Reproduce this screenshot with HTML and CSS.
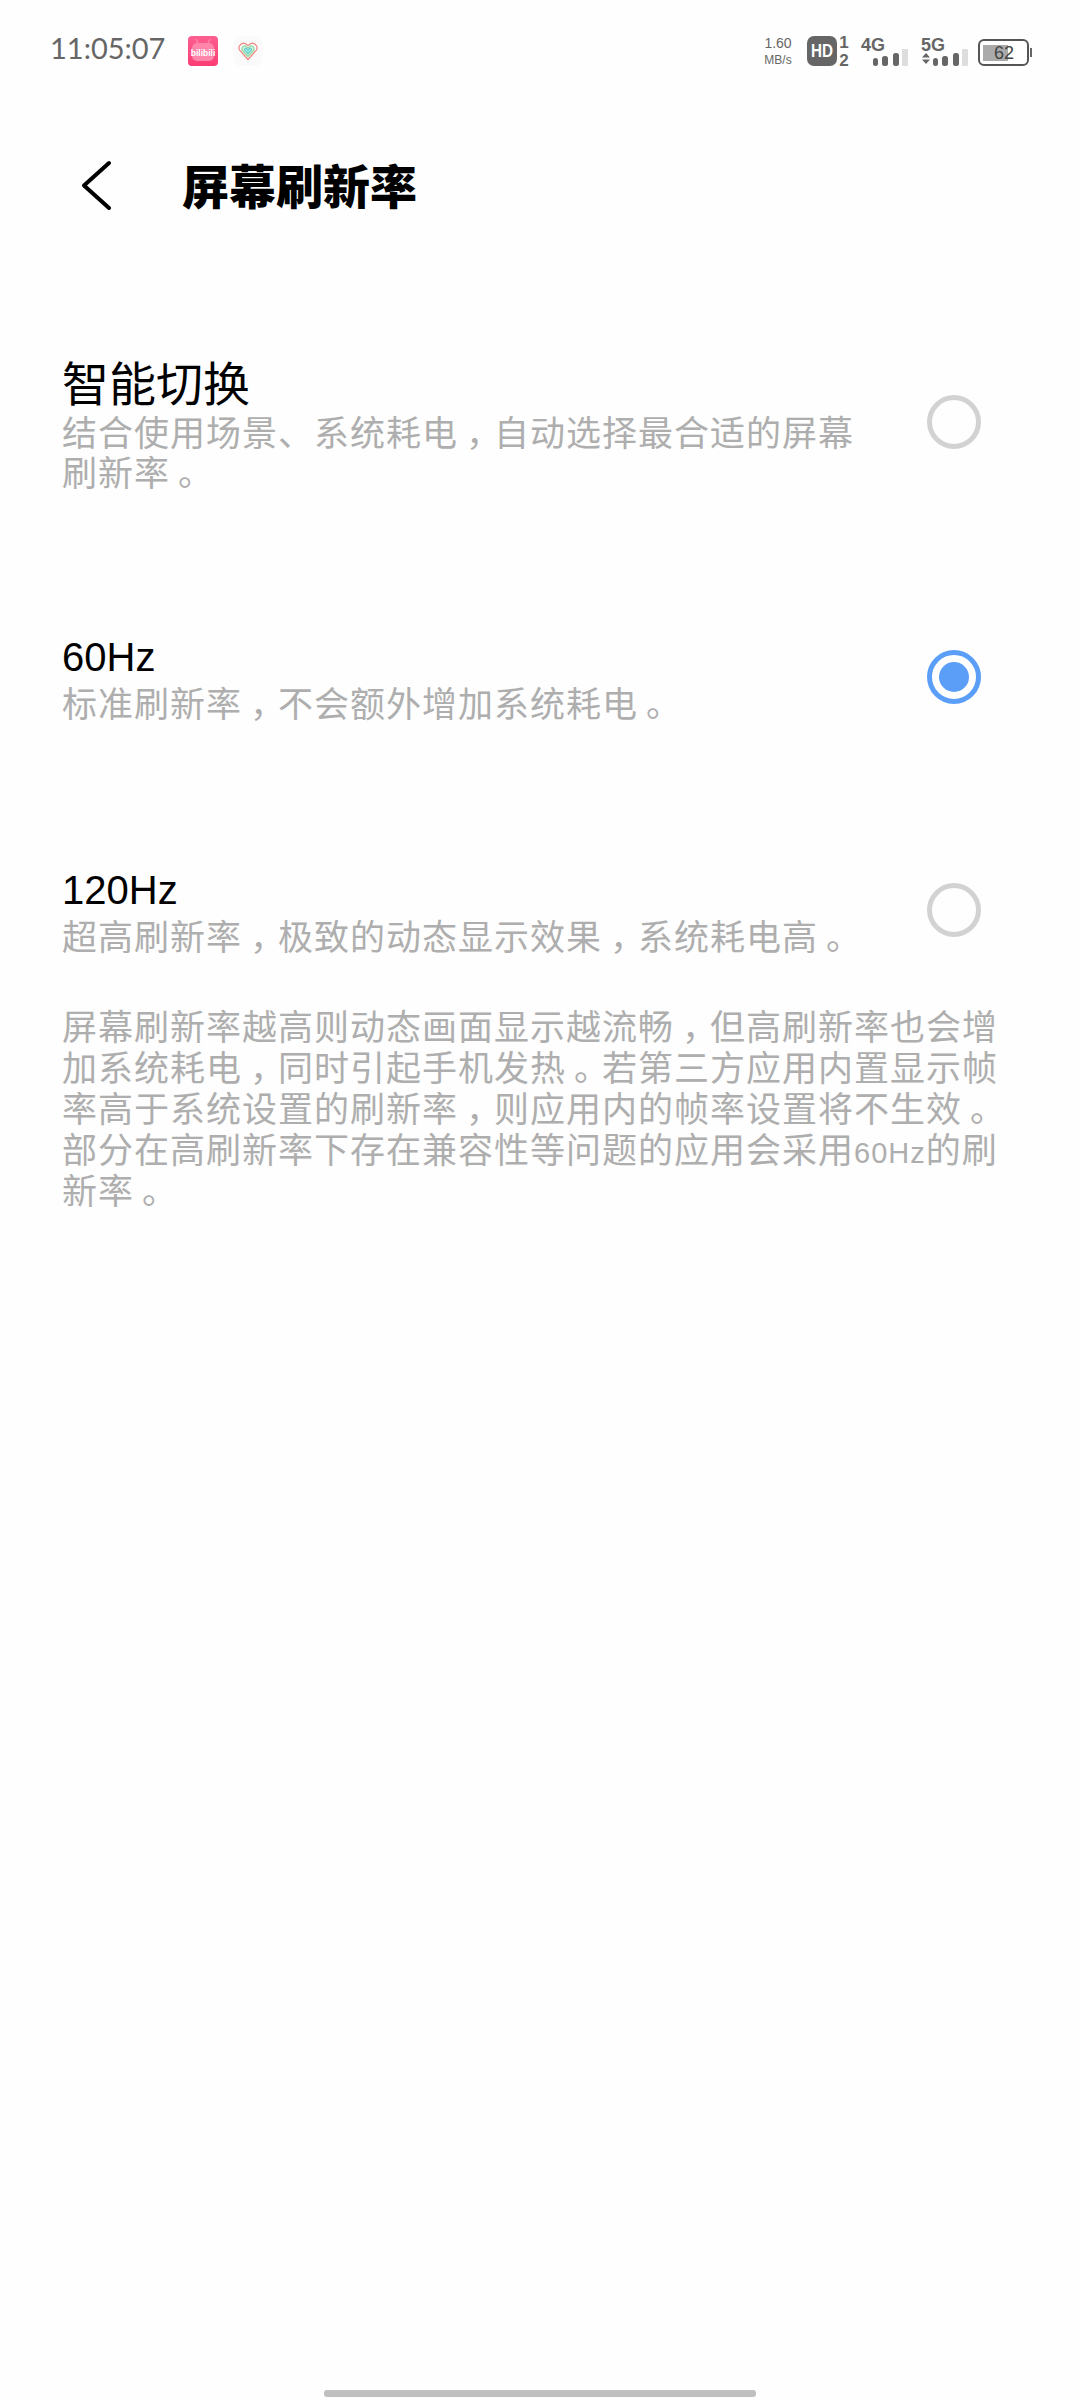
FILE: index.html
```html
<!DOCTYPE html>
<html lang="zh-CN">

<head>
  <meta charset="UTF-8" />
  <title>屏幕刷新率</title>
  <link rel="stylesheet" href="styles.css">
</head>

<body>
  <div class="page">
    <!--状态栏-->
    <div class="status">
      <span class="time">11:05:07</span>
      <svg class="app" width="30" height="30" viewBox="0 0 30 30">
        <defs>
          <linearGradient id="pink" x1="0" y1="0" x2="0" y2="1">
            <stop offset="0" stop-color="#fb5f90" />
            <stop offset="1" stop-color="#fb3c74" />
          </linearGradient>
        </defs>
        <rect width="30" height="30" rx="4" fill="url(#pink)" />
        <rect x="4" y="7" width="22" height="18" rx="5" fill="#ff85aa" />
        <path d="M10 7 8 3M20 7l2-4" stroke="#ff85aa" stroke-width="1.500" />
        <text x="15" y="20" class="bili">bilibili</text>
      </svg>
      <svg class="app" width="30" height="30" viewBox="0 0 30 30">
        <rect width="30" height="30" rx="8" fill="#fafafa" />
        <path d="M15 23.500 6.500 14C4.500 9.500 9 6.500 12 7.500l3 2 3-2c3-1 7.500 2 5.500 6.500z" fill="#fff" stroke="#ee8a84" stroke-width="1.300" />
        <path d="M15 20.500 9 14c-1-3 2-4.500 3.500-4l2.500 1.800 2.500-1.800c1.500-.5 4.500 1 3.500 4z" fill="#d8f4e0" stroke="#8fd8a4" stroke-width="1.300" />
        <path d="M15 18 11.500 14c-.5-1.500 1-2 1.500-2l2 1.500 2-1.500c.5 0 2 .5 1.500 2z" fill="#8fe4dc" stroke="#5cc8d0" stroke-width="1" />
      </svg>
      <div class="status-right">
        <div class="speed"><span>1.60</span><span class="unit">MB/s</span></div>
        <svg class="hd-icon" width="54" height="42" viewBox="0 -5 54 42">
          <rect width="30" height="30" rx="7" fill="#666" />
          <text x="15" y="21" class="hd" textLength="22" lengthAdjust="spacingAndGlyphs">HD</text>
          <text x="37" y="12" class="sim">1</text>
          <text x="37" y="30" class="sim">2</text>
        </svg>
        <svg width="60" height="32" viewBox="0 0 60 32">
          <text x="0" y="15" class="net">4G</text>
          <rect x="12" y="22" width="5" height="8" rx="2.500" fill="#666" />
          <rect x="21" y="20" width="6" height="10" rx="2.500" fill="#666" />
          <rect x="32" y="17" width="6" height="13" rx="2.500" fill="#666" />
          <rect x="41" y="13" width="6" height="17" rx="1" fill="#ddd" />
        </svg>
        <svg width="57" height="32" viewBox="0 0 57 32">
          <text x="0" y="15" class="net">5G</text>
          <path d="M5 17l4 4.500H1zM1 23.500h8L5 28z" fill="#666" />
          <rect x="12" y="22" width="5" height="8" rx="2.500" fill="#666" />
          <rect x="21" y="20" width="6" height="10" rx="2.500" fill="#666" />
          <rect x="32" y="17" width="6" height="13" rx="2.500" fill="#666" />
          <rect x="41" y="13" width="6" height="17" rx="1" fill="#ddd" />
        </svg>
        <svg width="55" height="32" viewBox="0 0 55 32">
          <rect x="1" y="4" width="49" height="25" rx="5" fill="#fff" stroke="#555" stroke-width="2" />
          <rect x="5" y="9" width="25" height="16" fill="#aaa" />
          <rect x="52" y="12" width="2" height="9" fill="#666" />
          <text x="26" y="23" class="batt">62</text>
        </svg>
      </div>
    </div>

    <!--标题-->
    <div class="header">
      <svg class="back" width="30" height="50" viewBox="0 0 30 50">
        <path d="M28 3 3 25.500 28 48" fill="none" stroke="#000" stroke-width="4" stroke-linecap="round" stroke-linejoin="round" />
      </svg>
      <h1>屏幕刷新率</h1>
    </div>

    <div class="list">
      <div class="item item-first">
        <div class="text">
          <div class="name name-big">智能切换</div>
          <div class="desc desc-big">结合使用场景、系统耗电<span class="punct">，</span>自动选择最合适的屏幕<br>刷新率<span class="punct">。</span></div>
        </div>
        <span class="radio"></span>
      </div>
      <div class="item item-second">
        <div class="text">
          <div class="name">60Hz</div>
          <div class="desc">标准刷新率<span class="punct">，</span>不会额外增加系统耗电<span class="punct">。</span></div>
        </div>
        <span class="radio checked"></span>
      </div>
      <div class="item item-third">
        <div class="text">
          <div class="name">120Hz</div>
          <div class="desc">超高刷新率<span class="punct">，</span>极致的动态显示效果<span class="punct">，</span>系统耗电高<span class="punct">。</span></div>
        </div>
        <span class="radio"></span>
      </div>
    </div>

    <p class="note">屏幕刷新率越高则动态画面显示越流畅<span class="punct">，</span>但高刷新率也会增<br>加系统耗电<span class="punct">，</span>同时引起手机发热<span class="punct">。</span>若第三方应用内置显示帧<br>率高于系统设置的刷新率<span class="punct">，</span>则应用内的帧率设置将不生效<span class="punct">。</span><br>部分在高刷新率下存在兼容性等问题的应用会采用<span class="hz">60Hz</span>的刷<br>新率<span class="punct">。</span></p>

    <div class="home-bar"></div>
  </div>
</body>

</html>
```

FILE: styles.css
```css
* {
  padding: 0;
  margin: 0;
  box-sizing: border-box;
}

body {
  background: #fefefe;
  font-family: "Liberation Sans", "Noto Sans CJK SC", sans-serif;
}

.page {
  width: 1080px;
  height: 2400px;
  position: relative;
  overflow: hidden;
}

.status {
  height: 100px;
  padding: 36px 47px 0 50px;
  display: flex;
  align-items: flex-start;
}

.time {
  width: 138px;
  font-family: "Lato", sans-serif;
  font-size: 29px;
  line-height: 24px;
  color: #666;
}

.app {
  margin-right: 15px;
}

.status-right {
  margin-left: auto;
  display: flex;
  align-items: flex-start;
}

.speed {
  width: 44px;
  padding-right: 14px;
  display: flex;
  flex-direction: column;
  align-items: center;
  font-size: 14px;
  line-height: 14px;
  color: #666;
}

.speed .unit {
  margin-top: 2px;
  font-size: 12px;
  line-height: 16px;
}

.hd-icon {
  margin-top: -5px;
}

.bili {
  font: bold 8.500px "Liberation Sans", sans-serif;
  fill: #fff;
  text-anchor: middle;
}

.hd {
  font: bold 18px "Liberation Sans", sans-serif;
  fill: #fff;
  text-anchor: middle;
}

.sim {
  font: bold 17px "Liberation Sans", sans-serif;
  fill: #666;
  text-anchor: middle;
}

.net {
  font: bold 18px "Liberation Sans", sans-serif;
  fill: #666;
}

.batt {
  font: 18px "Liberation Sans", sans-serif;
  fill: #444;
  text-anchor: middle;
}

.header {
  height: 50px;
  margin-top: 60px;
  padding-left: 81px;
  display: flex;
  align-items: center;
}

.back {
  margin-right: 71px;
}

h1 {
  margin-top: 5px;
  font-size: 47px;
  line-height: 50px;
  font-weight: 900;
  color: #000;
}

.list {
  padding-left: 62px;
}

.item {
  display: flex;
  align-items: center;
  justify-content: space-between;
  padding-right: 99px;
}

.item-first {
  margin-top: 148px;
}

.item-second {
  margin-top: 143px;
}

.item-third {
  margin-top: 145px;
}

.name {
  font-size: 40px;
  line-height: 40px;
  color: #000;
}

.name-big {
  font-size: 47px;
  line-height: 54px;
}

.desc {
  margin-top: 8px;
  font-size: 35px;
  line-height: 40px;
  letter-spacing: 1px;
  color: #aeaeae;
  white-space: nowrap;
}

.desc-big {
  margin-top: 2px;
}

/* 标点在格子里偏右，不占多余宽度 */
.punct {
  padding-left: 8px;
  letter-spacing: -7px;
}

.radio {
  width: 54px;
  height: 54px;
  flex: none;
  margin-bottom: 8px;
  border: 5px solid #d2d2d2;
  border-radius: 50%;
}

.radio.checked {
  border-color: #5a9ef8;
  padding: 7px;
}

.radio.checked::before {
  content: "";
  display: block;
  width: 30px;
  height: 30px;
  border-radius: 50%;
  background: #5a9ef8;
}

.note {
  margin-top: 49px;
  padding-left: 62px;
  font-size: 35px;
  line-height: 41px;
  letter-spacing: 1px;
  color: #aeaeae;
  white-space: nowrap;
}

.hz {
  font-size: 29px;
  line-height: 1;
}

.home-bar {
  position: absolute;
  left: 324px;
  bottom: 3px;
  width: 432px;
  height: 7px;
  border-radius: 3px;
  background: #c0c0c0;
}
```
